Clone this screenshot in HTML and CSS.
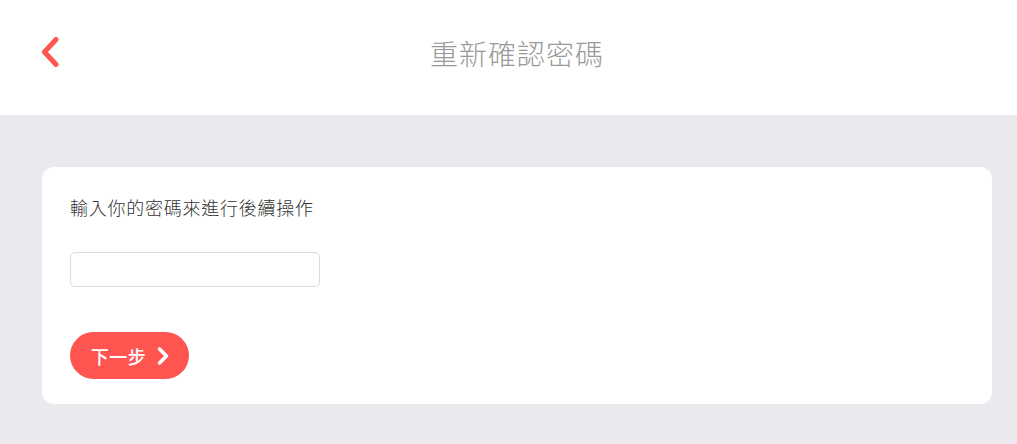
FILE: index.html
```html
<!DOCTYPE html>
<html lang="zh-Hant">
<head>
<meta charset="utf-8">
<link rel="stylesheet" href="styles.css">
</head>
<body>
<header class="topbar">
  <a class="back" href="#" aria-label="返回">
    <svg width="20" height="32" viewBox="0 0 20 32"><path d="M16 3.5 L4.5 16 L16 28.5" fill="none" stroke="#ff5550" stroke-width="5" stroke-linecap="round" stroke-linejoin="round"/></svg>
  </a>
  <h1 class="title">重新確認密碼</h1>
</header>
<main class="content">
  <section class="card">
    <p class="hint">輸入你的密碼來進行後續操作</p>
    <input class="field" type="password">
    <button class="next">下一步
      <svg width="14" height="20" viewBox="0 0 14 20"><path d="M3.5 3 L10.5 10 L3.5 17" fill="none" stroke="#fff" stroke-width="3.6" stroke-linecap="round" stroke-linejoin="round"/></svg>
    </button>
  </section>
</main>
</body>
</html>
```
FILE: styles.css
```css
* { box-sizing: border-box; }
html, body { margin: 0; padding: 0; }
body {
  width: 1017px;
  height: 444px;
  background: #ebe9ee;
  font-family: "Noto Sans CJK TC", "Noto Sans", sans-serif;
  overflow: hidden;
}
.topbar {
  height: 115px;
  background: #fff;
  display: flex;
  align-items: center;
  justify-content: center;
  position: relative;
  padding-left: 17px;
}
.back {
  position: absolute;
  left: 40px;
  top: 36px;
  display: flex;
}
.title {
  margin: 0;
  font-size: 28px;
  font-weight: 300;
  color: #999;
  letter-spacing: 1px;
  margin-top: -10px;
}
.content {
  padding: 52px 25px 40px 42px;
}
.card {
  background: #fff;
  border-radius: 12px;
  width: 950px;
  height: 237px;
  padding: 24px 28px 25px 28px;
  display: flex;
  flex-direction: column;
  align-items: flex-start;
}
.hint {
  margin: 0;
  font-size: 18px;
  font-weight: 300;
  line-height: 32px;
  color: #333;
  letter-spacing: 0.75px;
}
.field {
  margin-top: 29px;
  width: 250px;
  height: 35px;
  border: 1px solid #dcdcdc;
  border-radius: 5px;
  outline: none;
}
.next {
  margin-top: 45px;
  height: 47px;
  width: 119px;
  border: none;
  border-radius: 24px;
  background: #ff5550;
  color: #fff;
  font-family: inherit;
  font-size: 18px;
  font-weight: 500;
  display: flex;
  align-items: center;
  justify-content: center;
  gap: 10px;
  padding: 0 0 0 2px;
  letter-spacing: 0.5px;
}
.next svg { margin-top: 1px; }
```
